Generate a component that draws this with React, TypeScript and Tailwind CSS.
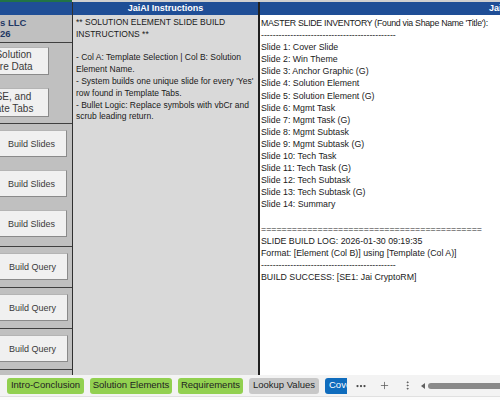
import { MoreHorizontal, Plus, MoreVertical } from "lucide-react";

const inventory = [
  "MASTER SLIDE INVENTORY (Found via Shape Name 'Title'):",
  "----------------------------------------------",
  "Slide 1: Cover Slide",
  "Slide 2: Win Theme",
  "Slide 3: Anchor Graphic (G)",
  "Slide 4: Solution Element",
  "Slide 5: Solution Element (G)",
  "Slide 6: Mgmt Task",
  "Slide 7: Mgmt Task (G)",
  "Slide 8: Mgmt Subtask",
  "Slide 9: Mgmt Subtask (G)",
  "Slide 10: Tech Task",
  "Slide 11: Tech Task (G)",
  "Slide 12: Tech Subtask",
  "Slide 13: Tech Subtask (G)",
  "Slide 14: Summary",
  "",
  "===========================================",
  "SLIDE BUILD LOG: 2026-01-30 09:19:35",
  "Format: [Element (Col B)] using [Template (Col A)]",
  "----------------------------------------------",
  "BUILD SUCCESS: [SE1: Jai CryptoRM]",
];

const instructions = [
  "** SOLUTION ELEMENT SLIDE BUILD",
  "INSTRUCTIONS **",
  "",
  "- Col A: Template Selection | Col B: Solution",
  "Element Name.",
  "- System builds one unique slide for every 'Yes'",
  "row found in Template Tabs.",
  "- Bullet Logic: Replace symbols with vbCr and",
  "scrub leading return.",
];

function SheetButton({ label, className }: { label: React.ReactNode; className: string }) {
  return (
    <div
      className={`bg-[#f0f0f0] border border-[#b4b4b4] border-b-[#8a8a8a] border-r-[#8a8a8a] text-[#3a3a3a] text-[9px] leading-[12px] flex items-center justify-center text-center ${className}`}
    >
      {label}
    </div>
  );
}

function Tab({ label, className }: { label: string; className: string }) {
  return (
    <div className={`h-[16px] px-[5px] rounded-[3px] flex items-center text-[9.5px] whitespace-nowrap ${className}`}>
      {label}
    </div>
  );
}

export default function App() {
  return (
    <div className="w-[500px] h-[400px] overflow-hidden flex flex-col bg-white font-['Liberation_Sans',Arial,sans-serif]">
      {/* top strip */}
      <div className="h-[2px] flex">
        <div className="w-[72px] bg-[#217346]" />
        <div className="flex-1 bg-[#d0d0d0]" />
      </div>

      <div className="h-[373px] flex">
        {/* Column A */}
        <div className="w-[73px] shrink-0 border-r border-[#303030] bg-[#c0c0c0] flex flex-col overflow-hidden">
          <div className="h-[13px] bg-[#1f4e96]" />
          <div className="h-[28px] border-b border-[#404040] pt-[2px] text-[9.5px] leading-[11px] font-bold text-[#1f3864]">
            <div>s LLC</div>
            <div>26</div>
          </div>
          <div className="h-[81px] border-b border-[#404040] flex flex-col pt-[4px] gap-[13px]">
            <SheetButton
              className="-ml-[22px] w-[71px] h-[28px] text-[10px]"
              label={
                <span>
                  Solution
                  <br />
                  ure Data
                </span>
              }
            />
            <SheetButton
              className="-ml-[22px] w-[71px] h-[29px] text-[10px]"
              label={
                <span>
                  SE, and
                  <br />
                  late Tabs
                </span>
              }
            />
          </div>
          <div className="h-[123px] border-b border-[#404040] flex flex-col pt-[6px] gap-[13px]">
            <SheetButton className="-ml-[4px] w-[71px] h-[27px]" label="Build Slides" />
            <SheetButton className="-ml-[4px] w-[71px] h-[27px]" label="Build Slides" />
            <SheetButton className="-ml-[4px] w-[71px] h-[27px]" label="Build Slides" />
          </div>
          {[0, 1, 2].map((i) => (
            <div key={i} className="h-[41px] border-b border-[#404040] pt-[6px] shrink-0">
              <SheetButton className="-ml-[3px] w-[71px] h-[27px]" label="Build Query" />
            </div>
          ))}
        </div>

        {/* Column B */}
        <div className="w-[187px] shrink-0 border-r-2 border-[#202020] bg-[#d9d9d9] flex flex-col overflow-hidden">
          <div className="h-[13px] bg-[#1f4e96] text-white font-bold text-[9px] flex items-center justify-center">
            JaiAI Instructions
          </div>
          <div className="pl-[3px] pt-[2px] text-[8.5px] leading-[11.8px] text-[#1a1a1a] whitespace-nowrap">
            {instructions.map((l, i) => (
              <div key={i} className="h-[11.8px]">
                {l}
              </div>
            ))}
          </div>
        </div>

        {/* Column C */}
        <div className="flex-1 min-w-0 flex flex-col bg-white overflow-hidden">
          <div className="h-[13px] bg-[#1f4e96] text-white font-bold text-[9px] flex items-center pl-[229px] whitespace-nowrap">
            JaiAI Output
          </div>
          <div className="pl-[1px] pt-[2px] text-[8.8px] leading-[12.1px] text-[#1a1a1a] whitespace-nowrap">
            {inventory.map((l, i) => (
              <div key={i} className={`h-[12.1px] ${i === 0 ? "tracking-[-0.3px]" : ""}`}>
                {l}
              </div>
            ))}
          </div>
        </div>
      </div>

      {/* Sheet tabs */}
      <div className="h-[21px] bg-[#f3f3f3] flex items-center pl-[7px] gap-[6px] text-[#222]">
        <Tab label="Intro-Conclusion" className="bg-[#92d050] w-[77px] justify-center" />
        <Tab label="Solution Elements" className="bg-[#92d050] w-[82px] justify-center" />
        <Tab label="Requirements" className="bg-[#92d050] w-[65px] justify-center" />
        <Tab label="Lookup Values" className="bg-[#c8c8c8] w-[70px] justify-center" />
        <div className="w-[22px] h-[16px] rounded-l-[3px] bg-[#0f6cbd] text-white text-[9.5px] flex items-center pl-[4px] overflow-hidden whitespace-nowrap">
          Cover
        </div>
        <MoreHorizontal className="w-[12px] h-[12px] text-[#444] ml-[2px]" strokeWidth={2.5} />
        <Plus className="w-[11px] h-[11px] text-[#555] ml-[6px]" strokeWidth={1.6} />
        <MoreVertical className="w-[11px] h-[11px] text-[#555] ml-[6px]" strokeWidth={2} />
        <div className="flex-1 flex items-center ml-[2px] gap-[3px]">
          <div className="w-0 h-0 border-y-[3px] border-y-transparent border-r-[4px] border-r-[#606060]" />
          <div className="flex-1 h-[6px] bg-[#8a8a8a] rounded-l-[3px]" />
        </div>
      </div>
      <div className="flex-1 bg-[#fbfbfb] border-t border-[#e0e0e0]" />
    </div>
  );
}
